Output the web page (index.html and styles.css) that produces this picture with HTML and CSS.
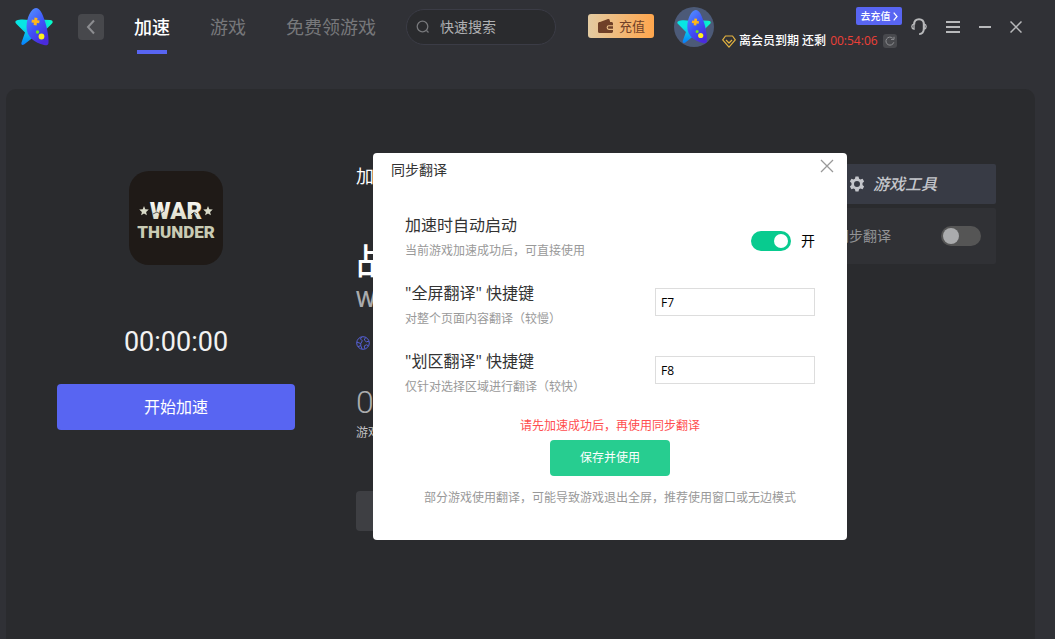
FILE: index.html
```html
<!DOCTYPE html>
<html lang="zh-CN">
<head>
<meta charset="utf-8">
<title>同步翻译</title>
<link rel="stylesheet" href="styles.css">
</head>
<body>
<svg class="defs" aria-hidden="true">
  <defs>
    <linearGradient id="cyan" x1="0" y1="0" x2="0" y2="1"><stop offset=".3" stop-color="#07e6e4"/><stop offset="1" stop-color="#087dff"/></linearGradient>
    <linearGradient id="mint" x1="0" y1="0" x2="1" y2="0"><stop offset="0" stop-color="#08c9e4"/><stop offset="1" stop-color="#08ffc8"/></linearGradient>
    <linearGradient id="violet" x1="0" y1="0" x2=".6" y2="1"><stop offset="0" stop-color="#5596ff"/><stop offset=".55" stop-color="#3f55f8"/><stop offset="1" stop-color="#4a2bdc"/></linearGradient>
    <symbol id="star" viewBox="0 0 38 38">
      <path fill="url(#cyan)" d="M1.500 12.500C5 11 10 11.500 14 12L26 28L20 28L9 36.500C7 37.500 6 36.500 6.500 34.500L10 24.500L1.500 16C0 14.500 0 13 1.500 12.500Z"/>
      <path fill="url(#mint)" d="M23 11.500L35 12C38 12 38.500 14.500 36.500 16L27 25.500Z"/>
      <path fill="url(#violet)" d="M21 0C25 0 27.500 6 29.500 12C32 19 34 29 33.500 35C33.300 37.500 31 37.500 29 37C20 35 11.500 29 11.500 19C11.500 10 16 0 21 0Z"/>
      <path fill="#ffb51b" d="M19.500 9.500l3 .4-.3 2.300 2.400.3-.4 2.800-2.300-.3-.3 2.400-3-.4.3-2.300-2.400-.3.400-2.800 2.300.3Z"/>
      <circle cx="22.500" cy="24" r="1.700" fill="#6be51d"/><circle cx="26.500" cy="28.500" r="2.900" fill="#fff01c"/>
    </symbol>
  </defs>
</svg>
<div class="app">
  <header class="topbar">
    <svg class="logo"><use href="#star"/></svg>
    <button class="back" aria-label="返回"><svg width="12" height="16" viewBox="0 0 12 16"><path d="M9 1.500 3 8l6 6.500"/></svg></button>
    <nav class="tabs">
      <a class="tab active" href="#boost">加速</a>
      <a class="tab" href="#games">游戏</a>
      <a class="tab" href="#free">免费领游戏</a>
    </nav>
    <label class="search">
      <svg width="14" height="14" viewBox="0 0 14 14"><circle cx="6.500" cy="6.500" r="5.300"/><path d="m10.500 10.500 2 2"/></svg>
      <input type="text" placeholder="快速搜索" aria-label="快速搜索">
    </label>
    <button class="recharge">
      <svg width="17" height="16" viewBox="0 0 17 16"><path fill="#6f4028" d="M3 4 11 1c.8-.2 1.400.1 1.600.8l.5 2.200h1.400c.8 0 1.500.7 1.500 1.500v1.700h-4a2.400 2.400 0 0 0 0 4.800h4v1.500c0 .8-.7 1.500-1.500 1.500h-12C1.500 15 1 14.300 1 13.500v-8C1 4.500 1.800 4 3 4Z"/><path fill="#6f4028" d="M12 8.300h4v2.500h-4a1.200 1.200 0 0 1 0-2.500Z"/></svg>
      充值
    </button>
    <button class="avatar" aria-label="账户"><svg><use href="#star"/></svg></button>
    <div class="member">
      <a class="renew" href="#renew">去充值<svg width="5" height="9" viewBox="0 0 5 9"><path d="m.7.7 3.300 3.800L.7 8.300"/></svg></a>
      <div class="expiry">
        <svg width="14" height="13" viewBox="0 0 14 13" fill="none" stroke="#e3b341" stroke-width="1.200" stroke-linejoin="round"><path d="M3.500 1h7L13.300 4.800 7 12.200.7 4.800Z"/><path d="m4 5 3 3 3-3"/></svg>
        <span class="expiry-label">离会员到期 还剩</span>
        <span class="expiry-time">00:54:06</span>
        <button class="refresh" aria-label="刷新"><svg width="10" height="10" viewBox="0 0 10 10"><path d="M8.800 6.300A4 4 0 1 1 7.700 2.200M6 3.400h3V.8"/></svg></button>
      </div>
    </div>
    <div class="window-actions">
      <button aria-label="客服"><svg width="16" height="18" viewBox="0 0 16 18"><path d="M3.200 6.500C3 3 5 1.200 8 1.200s5 1.800 4.800 5.300v4.200c0 3.300-1.700 5.500-4.600 5.300"/><path d="M3 5.800C1.300 6.200.8 7.200.8 8.500s.7 2.300 2.200 2.700ZM13 5.800c1.700.4 2.200 1.400 2.200 2.700s-.7 2.300-2.200 2.700Z" stroke-width="1.300"/></svg></button>
      <button aria-label="菜单"><svg width="14" height="12" viewBox="0 0 14 12"><path d="M0 1h14M0 6h14M0 11h14"/></svg></button>
      <button aria-label="最小化"><svg width="12" height="12" viewBox="0 0 12 12"><path d="M0 6h12"/></svg></button>
      <button aria-label="关闭"><svg width="12" height="12" viewBox="0 0 12 12"><path stroke-width="1.500" d="m.5.5 11 11M11.500.5l-11 11"/></svg></button>
    </div>
  </header>

  <main class="panel">
    <section class="launch">
      <svg class="game-icon" viewBox="0 0 94 94" role="img" aria-label="War Thunder">
        <defs><linearGradient id="steel" x1="0" y1="0" x2="0" y2="1"><stop offset="0" stop-color="#fff"/><stop offset="1" stop-color="#d3d3bd"/></linearGradient></defs>
        <text class="logo-war" x="47" y="48" text-anchor="middle" fill="url(#steel)">WAR</text>
        <text class="logo-thunder" x="47" y="67" text-anchor="middle">THUNDER</text>
        <path fill="#d9dac8" d="m15 35 1.300 3.300 3.500.3-2.700 2.300.8 3.400-2.900-1.800-2.900 1.800.8-3.400-2.700-2.300 3.500-.3ZM79 35l1.300 3.300 3.500.3-2.700 2.300.8 3.400-2.900-1.800-2.900 1.800.8-3.400-2.700-2.300 3.500-.3Z"/>
        <path stroke="#1f1a17" stroke-width=".7" fill="none" d="m24 43 4-2 3 2 4-3M62 44l3-3 3 2"/>
      </svg>
      <div class="timer">00:00:00</div>
      <button class="start">开始加速</button>
    </section>
    <section class="details">
      <div class="mode">加</div>
      <h1>战</h1>
      <div class="subtitle">W</div>
      <svg class="globe" width="14" height="14" viewBox="0 0 14 14"><circle cx="7" cy="7" r="6.300"/><path d="M5.500 1 4.500 3 6.300 4.800 4.800 7.500 1 6.200M2 10.500l2.800-.8L6 13M9.500 1.500 8.300 4l2 1.800L13 5.200M12.500 9.800l-2.200-1L8.200 10l.8 2.800M4.800 7.500v2.200"/></svg>
      <div class="hours">0</div>
      <div class="caption">游戏</div>
      <button class="secondary" aria-label="更多"></button>
    </section>
    <aside class="tools">
      <h2><svg width="16" height="16" viewBox="0 0 16 16"><path fill-rule="evenodd" fill="#c4c6cb" d="M6.500.5h3l.6 2.300 1.300.7 2.200-.7 1.500 2.600L13.500 7v2l1.600 1.600-1.500 2.600-2.200-.7-1.300.7-.6 2.300h-3l-.6-2.300-1.300-.7-2.200.7L.9 10.600 2.500 9V7L.9 5.400l1.500-2.600 2.200.7 1.300-.7ZM8 5a3 3 0 1 0 0 6 3 3 0 0 0 0-6Z"/></svg>游戏工具</h2>
      <label class="tool">同步翻译<input class="switch muted" type="checkbox"></label>
    </aside>
  </main>

  <section class="dialog" role="dialog" aria-labelledby="dialog-title">
    <div class="dialog-head">
      <h2 id="dialog-title">同步翻译</h2>
      <button class="close" aria-label="关闭"><svg width="14" height="14" viewBox="0 0 14 14"><path d="m1 1 12 12M13 1 1 13"/></svg></button>
    </div>
    <div class="settings">
      <div class="setting">
        <div><label class="name" for="auto">加速时自动启动</label><p>当前游戏加速成功后，可直接使用</p></div>
        <div class="state"><input id="auto" class="switch" type="checkbox" checked><span>开</span></div>
      </div>
      <div class="setting">
        <div><label class="name" for="full">"全屏翻译" 快捷键</label><p>对整个页面内容翻译（较慢）</p></div>
        <input id="full" class="key" type="text" value="F7">
      </div>
      <div class="setting">
        <div><label class="name" for="area">"划区翻译" 快捷键</label><p>仅针对选择区域进行翻译（较快）</p></div>
        <input id="area" class="key" type="text" value="F8">
      </div>
    </div>
    <div class="dialog-foot">
      <p class="warning">请先加速成功后，再使用同步翻译</p>
      <button class="save">保存并使用</button>
      <p class="note">部分游戏使用翻译，可能导致游戏退出全屏，推荐使用窗口或无边模式</p>
    </div>
  </section>
</div>
</body>
</html>
```

FILE: styles.css
```css
* { box-sizing: border-box; }
body {
  margin: 0;
  padding-right: 2px;
  background: #fff;
  font: 12px/18px "Open Sans", "Noto Sans CJK SC", sans-serif;
}
button, input { font: inherit; }
button { border: 0; padding: 0; background: none; color: inherit; cursor: pointer; }
h1, h2, p { margin: 0; font-weight: 400; }
a { text-decoration: none; }
svg { flex: none; display: block; }
.defs { position: absolute; width: 0; height: 0; }
.app {
  position: relative;
  display: flex;
  flex-direction: column;
  min-height: 100vh;
  background: #303136;
  color: #fff;
}

/* Top bar */
.topbar { display: flex; height: 54px; margin-bottom: 35px; padding: 0 33px 0 15px; align-items: center; white-space: nowrap; }
.logo { width: 38px; height: 38px; }
.back { display: grid; place-items: center; width: 26px; height: 26px; margin: 0 30px 0 25px; border-radius: 4px; background: #47484c; }
.back path { fill: none; stroke: #8c8d90; stroke-width: 2; }
.tabs { display: flex; gap: 40px; align-self: stretch; }
.tab { display: flex; flex-direction: column; align-items: center; justify-content: space-between; padding-top: 15px; color: #77787b; font-size: 18px; line-height: 24px; }
.tab::after { content: ""; width: 30px; height: 4px; }
.tab.active { color: #fff; font-weight: 500; }
.tab.active::after { background: #5865f2; }
.search { display: flex; align-items: center; gap: 10px; width: 150px; height: 36px; margin-left: 30px; padding: 0 9px; border: 1px solid #3b3c46; border-radius: 18px; background: #2a2b2e; }
.search svg { fill: none; stroke: #77787b; stroke-width: 1.3; }
.search input { width: 100%; min-width: 0; padding: 0; border: 0; outline: 0; background: none; color: #b5b6b8; font-size: 14px; }
.search input::placeholder { color: #b0b1b3; opacity: 1; }
.recharge { display: flex; align-items: center; justify-content: center; gap: 5px; width: 66px; height: 24px; margin: 0 20px 2px 32px; border-radius: 3px; background: linear-gradient(90deg, #e3cba2, #ffa64d); color: #6f4028; font-size: 13px; }
.avatar { display: grid; place-items: center; width: 40px; height: 40px; border-radius: 50%; background: #4c5a78; }
.avatar svg { width: 34px; height: 34px; }
.member { display: flex; flex-direction: column; align-items: flex-end; gap: 7px; width: 180px; margin: 3px 0 0 8px; }
.renew { display: flex; align-items: center; justify-content: center; gap: 2px; width: 46px; height: 18px; border-radius: 2px; background: #5865f2; color: #fff; font-size: 10px; font-weight: 500; }
.renew path { fill: none; stroke: #fff; stroke-width: 1.2; }
.expiry { display: flex; align-items: center; align-self: stretch; height: 18px; }
.expiry-label { margin-left: 3px; font-weight: 500; }
.expiry-time { margin-left: 4px; color: #ed4038; }
.refresh { display: grid; place-items: center; width: 14px; height: 14px; margin-left: 5px; border-radius: 3px; background: #48494d; }
.refresh path { fill: none; stroke: #8e8f92; }
.window-actions { display: flex; align-items: center; gap: 19px; margin-left: auto; }
.window-actions svg { fill: none; stroke: #b8b9bb; stroke-width: 2; }

/* Main panel */
.panel { display: flex; flex: 1; margin: 0 20px 0 6px; padding: 75px 39px 40px 51px; border-radius: 10px 10px 0 0; background: #2a2b2e; }
.launch { display: flex; flex-direction: column; align-items: center; width: 238px; padding-top: 7px; }
.game-icon { width: 94px; height: 94px; border-radius: 20px; background: #1f1a17; }
.logo-war { font: 900 24px "Roboto", sans-serif; }
.logo-thunder { font: 900 17px "Roboto", sans-serif; fill: #c9cbb4; }
.timer { margin: 61px 0 25px; color: #f2f2f2; font: 400 27px/33px "Roboto", sans-serif; }
.start { width: 100%; height: 46px; border-radius: 4px; background: #5865f2; font-size: 16px; }
.details { flex: 1; margin-left: 61px; }
.mode { font-size: 18px; line-height: 24px; }
.details h1 { margin-top: 50px; font-size: 36px; font-weight: 500; line-height: 48px; }
.subtitle { color: #aaabad; font: 600 21px/26px "Open Sans", sans-serif; }
.globe { margin: 24px 0 34px; fill: none; stroke: #5560d8; }
.hours { color: #aaabad; font: 300 32px/36px "Roboto", sans-serif; }
.caption { margin: 4px 0 49px; color: #c2c3c5; }
.secondary { width: 160px; height: 40px; border-radius: 4px; background: #3e3f43; }
.tools { width: 200px; }
.tools h2 { display: flex; align-items: center; gap: 8px; height: 40px; margin-bottom: 4px; padding-left: 53px; border-radius: 2px; background: #383b45; color: #c4c6cb; font-size: 16px; font-style: italic; font-weight: 500; }
.tool { display: flex; align-items: center; justify-content: space-between; height: 56px; padding: 0 15px 0 39px; border-radius: 2px; background: #303135; color: #929396; font-size: 14px; }

.switch { appearance: none; display: flex; align-items: center; justify-content: flex-start; width: 40px; height: 20px; margin: 0; padding: 0 2px; border-radius: 10px; background: #555; }
.switch::before { content: ""; width: 16px; height: 16px; border-radius: 50%; background: #aaabad; }
.switch:checked { justify-content: flex-end; padding: 0 3px; background: #08cb8f; }
.switch:checked::before { width: 14px; height: 14px; background: #fff; }

/* Translation dialog */
.dialog { position: absolute; top: 153px; left: 373px; width: 474px; padding: 0 13px 33px 18px; border-radius: 4px; background: #fff; color: #333; }
.dialog-head { display: flex; align-items: center; justify-content: space-between; height: 34px; }
.dialog-head h2 { font-size: 14px; line-height: 20px; }
.close { padding-bottom: 8px; }
.close path { fill: none; stroke: #999; stroke-width: 1.3; }
.settings { padding: 26px 19px 0 14px; }
.setting { display: flex; align-items: flex-start; justify-content: space-between; height: 68px; }
.name { display: block; font-size: 16px; line-height: 24px; }
.setting p { margin-top: 5px; color: #999; }
.state { display: flex; align-items: center; gap: 10px; margin-top: 18px; color: #000; font-size: 14px; line-height: 20px; }
.key { width: 160px; height: 28px; margin-top: 7px; padding: 0 5px; border: 1px solid #ddd; background: #fff; color: #000; }
.dialog-foot { display: flex; flex-direction: column; align-items: center; padding-right: 5px; }
.warning { color: #ff4d4f; }
.save { width: 120px; height: 36px; margin: 5px 0 13px; border-radius: 4px; background: #27cd90; color: #fff; }
.note { color: #999; }
```
